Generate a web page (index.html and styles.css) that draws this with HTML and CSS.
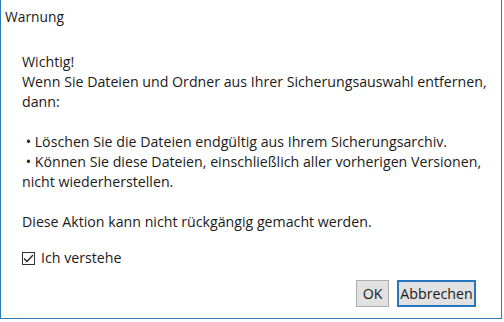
FILE: index.html
```html
<!DOCTYPE html>
<html lang="de">
<head>
    <meta charset="UTF-8">
    <title>Warnung</title>
    <link rel="stylesheet" href="styles.css">
</head>
<body>
    <div class="dialog">
        <div class="title">Warnung</div>

        <div class="content">
            <p>Wichtig!<br>
            Wenn Sie Dateien und Ordner aus Ihrer Sicherungsauswahl entfernen,<br>
            dann:</p>

            <p>&nbsp;• Löschen Sie die Dateien endgültig aus Ihrem Sicherungsarchiv.<br>
            &nbsp;• Können Sie diese Dateien, einschließlich aller vorherigen Versionen,<br>
            nicht wiederherstellen.</p>

            <p class="last">Diese Aktion kann nicht rückgängig gemacht werden.</p>

            <label class="check">
                <span class="box">
                    <svg width="11" height="9" viewBox="0 0 11 9"><path d="M1 4.5 L4 7.5 L10 1" fill="none" stroke="#222" stroke-width="1.3"/></svg>
                </span>
                Ich verstehe
            </label>
        </div>

        <div class="buttons">
            <button class="btn ok">OK</button>
            <button class="btn default">Abbrechen</button>
        </div>
    </div>
</body>
</html>
```

FILE: styles.css
```css
body {
    margin: 0;
    background: #fff;
}
.dialog {
    width: 500px;
    height: 318px;
    border: 1px solid #2e7bb0;
    border-top: none;
    font-family: "Open Sans", "Noto Sans", sans-serif;
    font-size: 14.2px;
    color: #1a1a1a;
    display: flex;
    flex-direction: column;
}
.title {
    padding: 7px 4px 0;
    line-height: 20px;
    font-size: 13.8px;
}
.content {
    padding: 25px 0 0 21px;
    line-height: 20px;
}
.content p {
    margin: 0 0 20px;
}
.content p.last {
    margin-bottom: 16px;
}
.check {
    display: flex;
    align-items: center;
    gap: 6px;
}
.box {
    width: 13px;
    height: 13px;
    border: 1px solid #333;
    display: flex;
    align-items: center;
    justify-content: center;
    box-sizing: border-box;
}
.buttons {
    display: flex;
    justify-content: flex-end;
    gap: 8px;
    padding: 12px 25px 0 0;
}
.btn {
    font-family: inherit;
    font-size: 14.2px;
    color: #1a1a1a;
    background: #e1e1e1;
    border: 1px solid #adadad;
    height: 27px;
    padding: 0;
}
.ok {
    width: 33px;
}
.default {
    width: 79px;
    border: 2px solid #2677c2;
}
```
